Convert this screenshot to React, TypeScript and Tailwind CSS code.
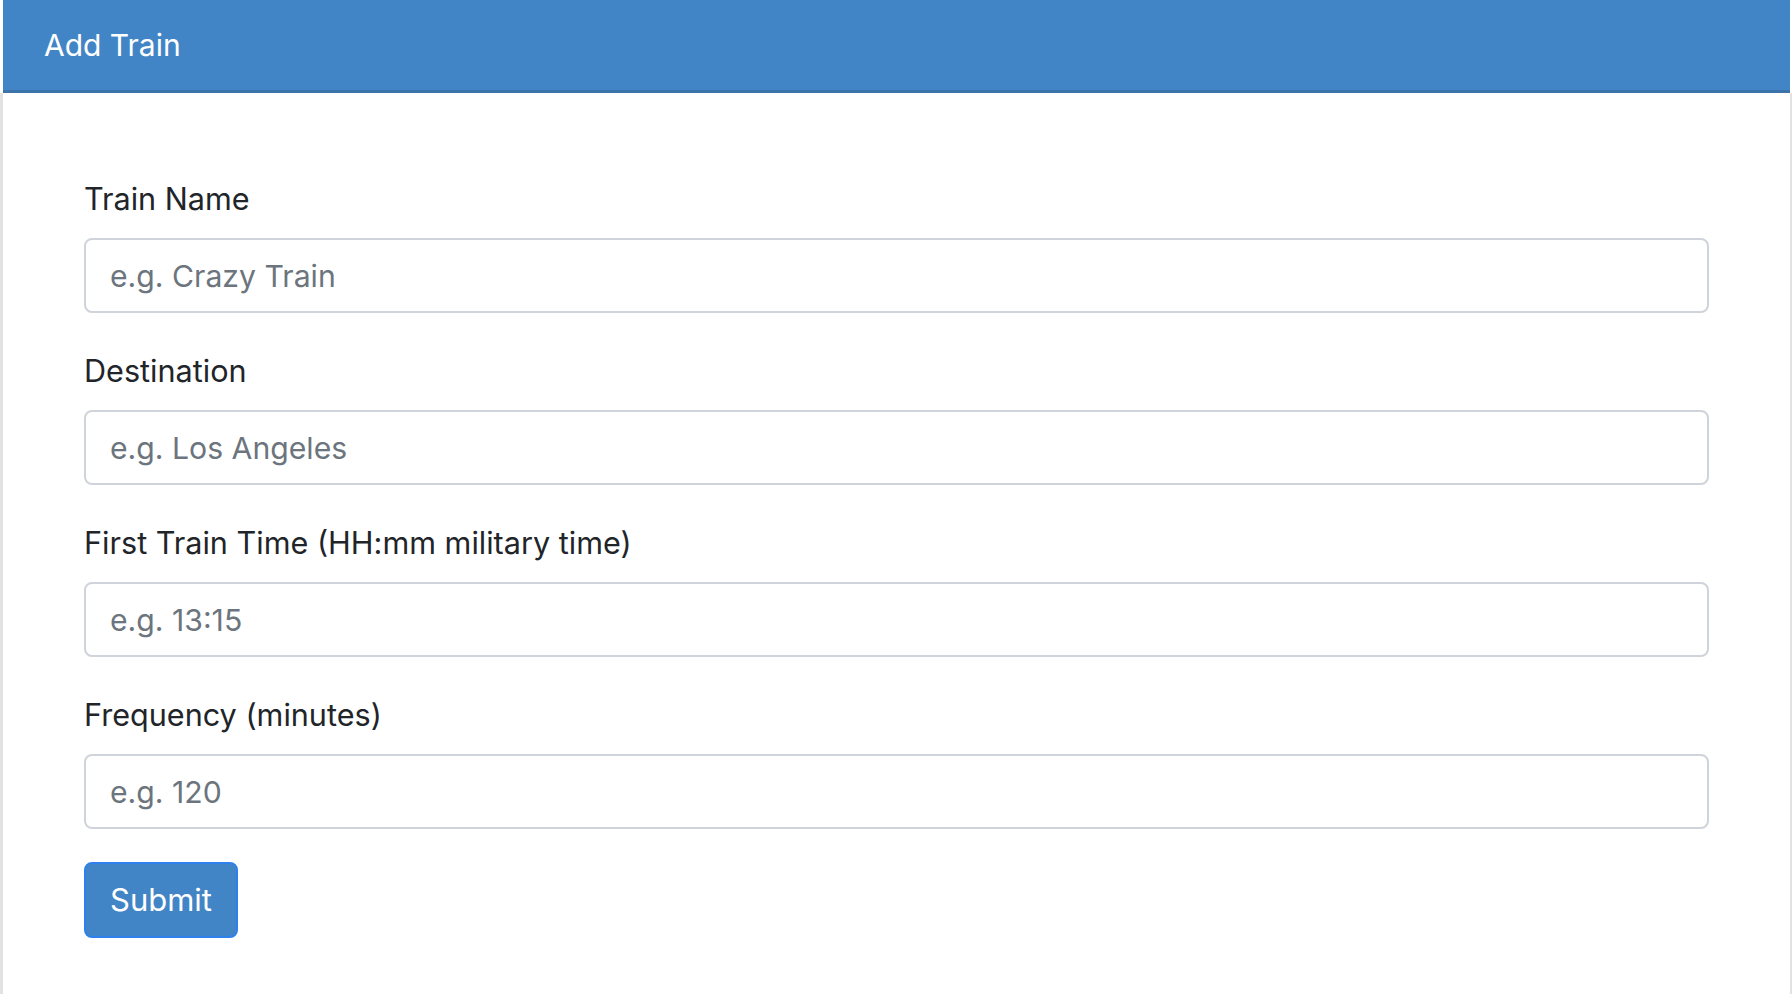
import React from "react";

const fields = [
  { label: "Train Name", placeholder: "e.g. Crazy Train" },
  { label: "Destination", placeholder: "e.g. Los Angeles" },
  { label: "First Train Time (HH:mm military time)", placeholder: "e.g. 13:15" },
  { label: "Frequency (minutes)", placeholder: "e.g. 120" },
];

export default function App() {
  return (
    <div className="w-full min-h-screen bg-white font-['Inter','Liberation_Sans',sans-serif]">
      {/* HEADER */}
      <div className="ml-[3px] mr-[2px] h-[93px] bg-[#4285c6] border-b-[3px] border-[#3c73a8] flex items-center pl-[41px]">
        <h1 className="text-white text-[30px] font-normal">Add Train</h1>
      </div>

      {/* FORM */}
      <div className="border-l-[3px] border-r-[2px] border-[#e2e2e2] min-h-[901px] px-[81px] pt-[83px]">
        <form onSubmit={(e) => e.preventDefault()}>
          <div className="flex flex-col gap-[35px]">
            {fields.map((f) => (
              <div key={f.label}>
                <label className="block text-[30.6px] leading-[46px] text-[#212529] mb-[16px]">
                  {f.label}
                </label>
                <input
                  type="text"
                  placeholder={f.placeholder}
                  className="block w-full h-[75px] px-[24px] text-[30.2px] text-[#495057] placeholder:text-[#6c757d] border-2 border-[#ced4da] rounded-[8px] outline-none"
                />
              </div>
            ))}
          </div>
          <button
            type="submit"
            className="block mt-[33px] h-[76px] px-[24px] bg-[#4285c6] text-white text-[31px] rounded-[8px] border-2 border-[#2f80ed]"
          >
            Submit
          </button>
        </form>
      </div>
    </div>
  );
}
